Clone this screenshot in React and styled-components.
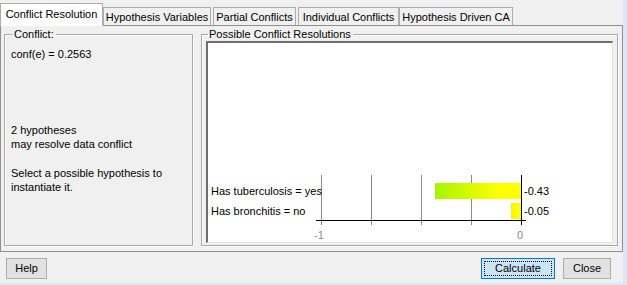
import React from 'react';
import styled, { createGlobalStyle } from 'styled-components';

const GlobalStyle = createGlobalStyle`
  html, body {
    margin: 0;
    padding: 0;
    background: #f0f0f0;
  }
  body {
    font-family: "Liberation Sans", Arial, sans-serif;
    font-size: 11px;
    color: #000;
  }
`;

const Window = styled.div`
  width: 627px;
  height: 285px;
  box-sizing: border-box;
  display: flex;
  flex-direction: column;
  background: #f0f0f0;
  border-right: 4px solid #dbe8f4;
  border-bottom: 2px solid #dbe8f4;
  overflow: hidden;
`;

const TabStrip = styled.div`
  display: flex;
  align-items: flex-end;
  height: 25px;
  flex-shrink: 0;
  position: relative;
  z-index: 1;
`;

const Tab = styled.div`
  box-sizing: border-box;
  width: ${(p) => p.$w}px;
  height: ${(p) => (p.$active ? 23 : 18)}px;
  margin-left: ${(p) => p.$gap}px;
  margin-bottom: ${(p) => (p.$active ? -1 : 0)}px;
  display: flex;
  align-items: center;
  justify-content: center;
  padding-bottom: ${(p) => (p.$active ? 2 : 0)}px;
  background: ${(p) => (p.$active ? '#ffffff' : '#f0f0f0')};
  border: 1px solid #acacac;
  border-bottom: ${(p) => (p.$active ? '1px solid #ffffff' : 'none')};
  font-size: 11px;
  white-space: nowrap;
`;

const TabPanel = styled.div`
  flex: 0 0 227px;
  box-sizing: border-box;
  border: 1px solid #8e8f8f;
  background: #f0f0f0;
  display: flex;
  padding: 2px 4px 5px 3px;
  gap: 8px;
`;

const Group = styled.fieldset`
  margin: 0;
  box-sizing: border-box;
  min-width: 0;
  border: 1px solid #a9a9a9;
  box-shadow: inset 1px 1px 0 #ffffff, 1px 1px 0 #ffffff;
  padding: ${(p) => p.$pad};
  width: ${(p) => (p.$w ? `${p.$w}px` : 'auto')};
  flex: ${(p) => (p.$w ? '0 0 auto' : '1 1 auto')};
  display: flex;
  flex-direction: column;
`;

const Legend = styled.legend`
  padding: 0 2px 0 1px;
  margin-left: 2px;
  font-size: 11px;
  line-height: 12px;
`;

const InfoText = styled.div`
  font-size: 11px;
  line-height: 14px;
  margin-top: ${(p) => p.$top || 0}px;
`;

const ChartBox = styled.div`
  flex: 1;
  background: #ffffff;
  border-top: 2px solid #6f6f6f;
  border-left: 2px solid #6f6f6f;
  border-right: 1px solid #e3e3e3;
  border-bottom: 1px solid #e3e3e3;
  display: flex;
  align-items: flex-end;
`;

const ChartSvg = styled.svg`
  display: block;
  font-family: "Liberation Sans", Arial, sans-serif;
  font-size: 11px;
`;

const ButtonBar = styled.div`
  flex: 1;
  display: flex;
  align-items: center;
  padding: 1px 12px 0 6px;
  gap: 8px;
`;

const Spacer = styled.div`
  flex: 1;
`;

const Button = styled.button`
  box-sizing: border-box;
  width: ${(p) => p.$w}px;
  height: 21px;
  padding: 0;
  font-family: "Liberation Sans", Arial, sans-serif;
  font-size: 11px;
  color: #000;
  background: ${(p) => (p.$focused ? '#cce4f7' : '#e1e1e1')};
  border: 1px solid ${(p) => (p.$focused ? '#0078d7' : '#adadad')};
  outline: ${(p) => (p.$focused ? '1px dotted #000' : 'none')};
  outline-offset: -4px;
`;

const tabs = [
  { label: 'Conflict Resolution', w: 103, gap: 0, active: true },
  { label: 'Hypothesis Variables', w: 108, gap: 0 },
  { label: 'Partial Conflicts', w: 83, gap: 2 },
  { label: 'Individual Conflicts', w: 101, gap: 2 },
  { label: 'Hypothesis Driven CA', w: 114, gap: 0 },
];

const resolutions = [
  { label: 'Has tuberculosis = yes', value: -0.43 },
  { label: 'Has bronchitis = no', value: -0.05 },
];

function Chart() {
  const x0 = 113;
  const x1 = 313;
  const scale = x1 - x0;
  const grid = [0, 1, 2, 3, 4].map((i) => x0 + (i * scale) / 4);
  return (
    <ChartSvg width="404" height="197" viewBox="0 0 404 197">
      <defs>
        {resolutions.map((r, i) => (
          <linearGradient key={i} id={`bar${i}`} x1="0" y1="0" x2="1" y2="0">
            <stop offset="0" stopColor={i === 0 ? '#a6f500' : '#f2f500'} />
            <stop offset="0.75" stopColor="#ffff00" />
            <stop offset="1" stopColor="#ffff00" />
          </linearGradient>
        ))}
      </defs>
      {grid.map((gx) => (
        <line key={gx} x1={gx + 0.5} y1="130" x2={gx + 0.5} y2="180" stroke="#8c8c8c" strokeWidth="1" />
      ))}
      <line x1="108" y1="175.5" x2="318" y2="175.5" stroke="#000" strokeWidth="1" />
      <line x1={x1 + 0.5} y1="130" x2={x1 + 0.5} y2="180" stroke="#000" strokeWidth="1" />
      {resolutions.map((r, i) => {
        const y = 138 + i * 20;
        const w = Math.max(-r.value * scale, 8);
        return (
          <g key={r.label}>
            <rect x={x1 - w} y={y} width={w} height="16" fill={`url(#bar${i})`} />
            <text x="3" y={y + 12}>{r.label}</text>
            <text x="316" y={y + 12}>{r.value.toFixed(2)}</text>
          </g>
        );
      })}
      <text x={x0 - 2} y="194" fill="#8a8a8a" textAnchor="middle">-1</text>
      <text x={x1 - 1} y="194" fill="#8a8a8a" textAnchor="middle">0</text>
    </ChartSvg>
  );
}

export default function App() {
  return (
    <>
      <GlobalStyle />
      <Window>
        <TabStrip>
          {tabs.map((t) => (
            <Tab key={t.label} $w={t.w} $gap={t.gap} $active={t.active}>
              {t.label}
            </Tab>
          ))}
        </TabStrip>
        <TabPanel>
          <Group $w={189} $pad="2px 6px 6px 6px">
            <Legend>Conflict:</Legend>
            <InfoText $top={5}>conf(e) = 0.2563</InfoText>
            <InfoText $top={62}>
              2 hypotheses
              <br />
              may resolve data conflict
            </InfoText>
            <InfoText $top={15}>
              Select a possible hypothesis to
              <br />
              instantiate it.
            </InfoText>
          </Group>
          <Group $pad="1px 4px 2px 4px">
            <Legend>Possible Conflict Resolutions</Legend>
            <ChartBox>
              <Chart />
            </ChartBox>
          </Group>
        </TabPanel>
        <ButtonBar>
          <Button $w={41}>Help</Button>
          <Spacer />
          <Button $w={74} $focused>Calculate</Button>
          <Button $w={48}>Close</Button>
        </ButtonBar>
      </Window>
    </>
  );
}
